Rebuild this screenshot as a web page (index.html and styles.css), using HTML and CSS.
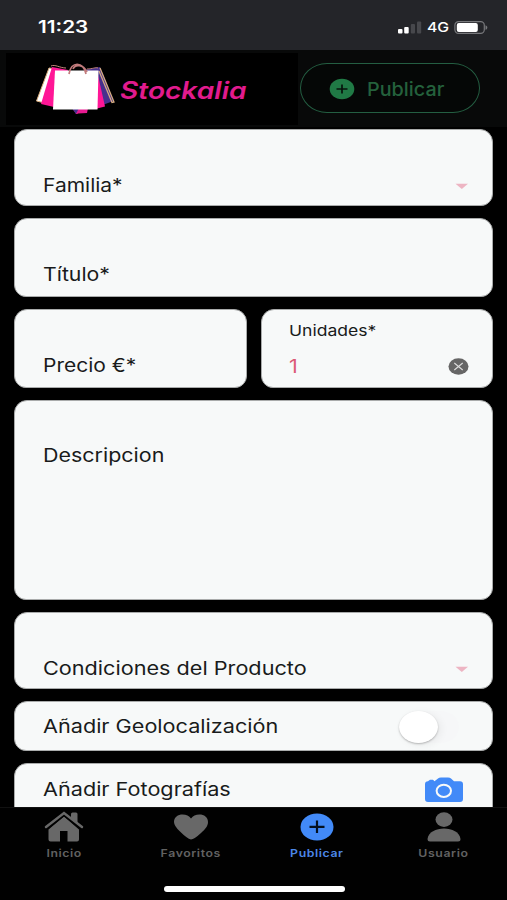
FILE: index.html
```html
<!DOCTYPE html>
<html lang="es">

<head>
    <meta charset="UTF-8" />
    <meta name="viewport" content="width=device-width, initial-scale=1.0" />
    <title>Stockalia</title>
    <link rel="stylesheet" href="styles.css">
</head>

<body>

    <div class="status-bar">
        <span class="time wide">11:23</span>
        <div class="status-icons">
            <svg width="24" height="13" viewBox="0 0 24 13">
                <rect x="0" y="8" width="4.5" height="4.5" rx="1" fill="#fff" />
                <rect x="6.2" y="6" width="4.5" height="6.5" rx="1" fill="#fff" />
                <rect x="12.8" y="3" width="4.2" height="9.5" rx="1" fill="#47484c" />
                <rect x="19" y="0.5" width="4.2" height="12" rx="1" fill="#47484c" />
            </svg>
            <span class="network wide">4G</span>
            <svg width="34" height="13" viewBox="0 0 34 13">
                <rect x="0.9" y="0.6" width="29.4" height="11.8" rx="3.6" fill="none" stroke="#77787b" stroke-width="1.2" />
                <rect x="2.8" y="2.1" width="21" height="8.8" rx="2" fill="#fff" />
                <path d="M31.5 4.2c2.4.8 2.4 3.8 0 4.6z" fill="#77787b" />
            </svg>
        </div>
    </div>

    <header class="header">
        <div class="logo">
            <svg width="82" height="52" viewBox="0 0 82 52">
                <path d="M37 46h16l-1 5-9 .5-1.500 1z" fill="#e81a91" />
                <path d="M37 46h7l-3 6z" fill="#46308d" />
                <path d="M14 6 1.500 39l8 2L22 7z" fill="#fff" stroke="#d8ac7c" />
                <path d="M17 5 6 42l13 3 14-37z" fill="#ff1696" />
                <path d="m49 8 16-3 13.500 34-11 4z" fill="#46308d" />
                <path d="m65 6 14 34-2 .5L64 9" fill="none" stroke="#d5ab83" stroke-width="1.300" />
                <path d="M16 4c4-2 9 2 15 2M52 7c6 0 8-2 11-1" fill="none" stroke="#c3877b" />
                <path d="m62 9 8 35.500-8 2z" fill="#ff1696" />
                <path d="M20 8.500h43.500L62.500 47.500h-44.500z" fill="#fff" />
                <path d="M34 12c2-13 14-13 17 0M38 7c2-5 10-5 14 3" fill="none" stroke="#c17b7c" stroke-width="1.700" />
            </svg>
            <span class="brand wide">Stockalia</span>
        </div>
        <button class="publish-btn">
            <svg width="26" height="22" viewBox="0 0 26 22">
                <ellipse cx="13" cy="11" rx="12.300" ry="10.300" fill="#207a45" />
                <path d="M7.500 11h11M13 6.500v9" stroke="#07130c" stroke-width="1.700" />
            </svg>
            <span class="publish-text wide">Publicar</span>
        </button>
    </header>

    <main class="form">
        <div class="field familia">
            <span class="label familia-label wide">Familia*</span>
            <svg class="arrow" width="14" height="7" viewBox="0 0 14 7"><path d="M0.500 0.800h12.500L6.800 6z" fill="#edb5c3" /></svg>
        </div>
        <div class="field titulo">
            <span class="label titulo-label wide">Título*</span>
        </div>
        <div class="row">
            <div class="field precio">
                <span class="label precio-label wide">Precio €*</span>
            </div>
            <div class="field units">
                <span class="small-label wide">Unidades*</span>
                <div class="units-value">
                    <span class="number wide">1</span>
                    <svg width="21" height="17" viewBox="0 0 21 17">
                        <ellipse cx="10.500" cy="8.500" rx="10" ry="8.200" fill="#666" />
                        <path d="m6.300 5 8.400 7M14.700 5l-8.400 7" stroke="#ddd" stroke-width="1.100" />
                    </svg>
                </div>
            </div>
        </div>
        <div class="field descripcion">
            <span class="label descripcion-label wide">Descripcion</span>
        </div>
        <div class="field condiciones">
            <span class="label condiciones-label wide">Condiciones del Producto</span>
            <svg class="arrow" width="14" height="7" viewBox="0 0 14 7"><path d="M0.500 0.800h12.500L6.800 6z" fill="#edb5c3" /></svg>
        </div>
        <div class="field option">
            <span class="label geo-label wide">Añadir Geolocalización</span>
            <div class="toggle"><div class="knob"></div></div>
        </div>
        <div class="field photos">
            <span class="label foto-label wide">Añadir Fotografías</span>
            <svg class="camera" width="38" height="26" viewBox="0 0 38 26">
                <path d="M3 4.200 5 2.800h3l1.500 1.400L13 1.500Q14 .5 16 .5h7q2 0 3 1l3 2.700h6q3 0 3 3V22q0 3-3 3H3q-3 0-3-3V7.200q0-3 3-3z" fill="#428af8" />
                <ellipse cx="18.800" cy="13.800" rx="7.200" ry="6.100" fill="none" stroke="#f7f9f9" stroke-width="2" />
            </svg>
        </div>
    </main>

    <nav class="tabs">
        <div class="tab">
            <svg width="40" height="32" viewBox="0 0 40 32">
                <path d="M20 5.500 4.500 18.500V28.500q0 2 2 2H16V20h7.500v10.500H33q2 0 2-2v-10z" />
                <path d="M2 16.500 20 2.200l18 14.300" fill="none" stroke="#000" stroke-width="5" />
                <path d="M27 3q0-1.500 1.500-1.500h3.500q1.500 0 1.500 1.500v10l-6.500-5z" />
                <path d="M2 16 20 2l18 14" fill="none" stroke="#686868" stroke-width="2.500" stroke-linecap="round" />
            </svg>
            <span class="inicio wide">Inicio</span>
        </div>
        <div class="tab">
            <svg width="40" height="32" viewBox="0 0 40 32">
                <path d="M20 28.500Q16 27.500 9 20.500 3 15 3 11C3 6 7 3.500 11.500 3.500 15.500 3.500 18 5 20 7.500c2-2.500 4.500-4 8.500-4C33 3.500 37 6 37 11c0 4-2.500 7-7 11Q23 28.500 20 28.500z" />
            </svg>
            <span class="favoritos wide">Favoritos</span>
        </div>
        <div class="tab active">
            <svg width="40" height="32" viewBox="0 0 40 32">
                <ellipse cx="20" cy="16" rx="16.500" ry="13.600" />
                <path d="M12.500 15.800h15M20 9.500v12.500" stroke="#04101f" stroke-width="2.200" />
            </svg>
            <span class="publicar wide">Publicar</span>
        </div>
        <div class="tab">
            <svg width="40" height="32" viewBox="0 0 40 32">
                <ellipse cx="20" cy="8.600" rx="8.500" ry="7.300" />
                <path d="M3.500 28C5 14 35 14 36.500 28q0 2.500-2.500 2.500H6q-2.500 0-2.500-2.500z" />
            </svg>
            <span class="usuario wide">Usuario</span>
        </div>
        <div class="home-indicator"></div>
    </nav>

</body>

</html>
```
FILE: styles.css
```css
* {
    box-sizing: border-box;
}

body {
    font-family: Inter, 'Liberation Sans', sans-serif;
    margin: 0;
    height: 900px;
    background: #000;
    color: #191b1b;
    display: flex;
    flex-direction: column;
    overflow: hidden;
}

svg {
    display: block;
    flex-shrink: 0;
}

.wide {
    display: block;
    white-space: nowrap;
    transform: scaleX(1.17);
    transform-origin: left center;
}

.status-bar {
    height: 50px;
    flex-shrink: 0;
    display: flex;
    justify-content: space-between;
    padding: 15px 19px 0 38px;
    background: #242529;
    color: #fff;
}

.time {
    font-size: 17px;
    line-height: 24px;
    font-weight: 600;
    transform: scaleX(1.22);
}

.status-icons {
    display: flex;
    align-items: center;
    height: 24px;
}

.network {
    width: 27px;
    margin-left: 5px;
    font-size: 13.5px;
    font-weight: 500;
}

.header {
    height: 79px;
    flex-shrink: 0;
    display: flex;
    background: #080909;
    border-bottom: 2px solid #000;
}

.logo {
    display: flex;
    width: 292px;
    height: 72px;
    margin: 3px 2px 0 6px;
    padding: 9px 0 0 29px;
    background: #000;
}

.brand {
    margin: 14px 0 0 3px;
    font-size: 24px;
    line-height: 30px;
    font-weight: 600;
    font-style: italic;
    color: #e11b8e;
}

.publish-btn {
    display: flex;
    align-items: center;
    width: 180px;
    height: 50px;
    margin-top: 13px;
    padding: 1px 0 0 28px;
    border: 1px solid #245e42;
    border-radius: 27px / 25px;
    background: #050706;
    color: #24613c;
    font-family: inherit;
}

.publish-text {
    margin-left: 12px;
    font-size: 18.5px;
    font-weight: 500;
    transform: scaleX(1.07);
}

.form {
    display: flex;
    flex-direction: column;
    gap: 12px;
    width: 479px;
    height: 678px;
    margin-left: 14px;
    overflow: hidden;
}

.field {
    display: flex;
    flex-shrink: 0;
    justify-content: space-between;
    padding: 43px 23px 0 28px;
    background: #f7f9f9;
    border: 1px solid #a9abab;
    border-radius: 13px 13px 12px 12px;
}

.familia,
.condiciones {
    height: 77px;
}

.titulo {
    height: 79px;
}

.row {
    display: grid;
    grid-template-columns: 233px 232px;
    gap: 14px;
    height: 79px;
    flex-shrink: 0;
}

.descripcion {
    height: 200px;
    padding-top: 42px;
}

.label {
    font-size: 18.5px;
    line-height: 24px;
}

.familia-label,
.precio-label {
    transform: scaleX(1.135);
}

.titulo-label {
    transform: scaleX(1.15);
}

.descripcion-label {
    transform: scaleX(1.16);
}

.arrow {
    margin-top: 10px;
}

.units {
    flex-direction: column;
    justify-content: flex-start;
    padding: 11px 23px 0 27px;
}

.small-label {
    font-size: 15px;
    line-height: 20px;
}

.units-value {
    display: flex;
    justify-content: space-between;
    align-items: center;
    height: 24px;
    margin-top: 13px;
}

.number {
    font-size: 18.5px;
    color: #dc5977;
}

.option {
    height: 50px;
    padding: 12px 33px 0 28px;
}

.toggle {
    width: 60px;
    height: 32px;
    margin-top: -3px;
    border-radius: 18px / 16px;
    background: #f6f7f8;
}

.knob {
    width: 39px;
    height: 32px;
    border-radius: 50%;
    background: #fff;
    box-shadow: 0 1px 2px rgba(0, 0, 0, 0.25), 3px 2px 8px rgba(0, 0, 0, 0.06);
}

.photos {
    height: 60px;
    padding: 13px 29px 0 28px;
}

.tabs {
    display: grid;
    grid-template-columns: repeat(4, 1fr);
    grid-template-rows: 78px 7px;
    height: 93px;
    padding-left: 1px;
    background: #010101;
    border-top: 1px solid #111;
}

.tab {
    display: flex;
    flex-direction: column;
    align-items: center;
    padding-top: 3px;
    color: #626262;
    fill: #686868;
}

.tab span {
    margin-top: 3px;
    font-size: 10.5px;
    line-height: 16px;
    font-weight: 600;
    letter-spacing: 0.5px;
    transform-origin: center;
}

.tab.active {
    color: #4c87e8;
    fill: #428af8;
}

.home-indicator {
    grid-column: 1 / -1;
    width: 181px;
    height: 6px;
    margin-left: 163px;
    border-radius: 3px;
    background: #fff;
}
```
